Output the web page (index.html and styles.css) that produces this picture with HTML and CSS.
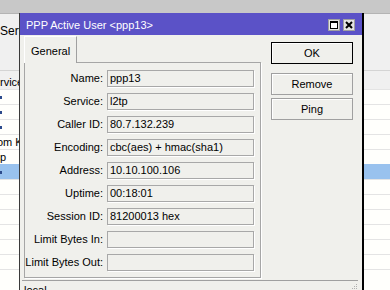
FILE: index.html
```html
<!DOCTYPE html>
<html lang="en">
<head>
    <meta charset="UTF-8">
    <title>PPP Active User</title>
    <link rel="stylesheet" href="styles.css">
</head>
<body>
    <div class="desk">
        <div class="desk-top"></div>
        <div class="toolbar"><span class="tb-tab">Serv</span></div>
        <div class="list-head"><span>rvice</span></div>
        <div class="row"><span class="mark"></span></div>
        <div class="row"><span class="mark"></span></div>
        <div class="row"><span class="mark"></span></div>
        <div class="row"><span class="cut">om K</span></div>
        <div class="row"><span>p</span></div>
        <div class="row selected"><span class="mark"></span></div>
        <div class="row"></div>
        <div class="row"></div>
        <div class="row"></div>
        <div class="row"></div>
        <div class="row"></div>
        <div class="row"></div>
        <div class="row"></div>
    </div>

    <div class="window">
        <div class="titlebar">
            <span class="title">PPP Active User &lt;ppp13&gt;</span>
            <span class="tb-buttons">
                <svg class="tb-btn" width="12" height="12" viewBox="0 0 12 12">
                    <rect x="0.5" y="0.5" width="11" height="11" fill="#e4e4e4" stroke="#a0a0a0"/>
                    <rect x="2.5" y="2.5" width="7" height="7" fill="#fff" stroke="#000"/>
                    <rect x="2" y="2" width="8" height="2" fill="#000"/>
                </svg>
                <svg class="tb-btn" width="12" height="12" viewBox="0 0 12 12">
                    <rect x="0.5" y="0.5" width="11" height="11" fill="#e4e4e4" stroke="#a0a0a0"/>
                    <path d="M3 3L9 9M9 3L3 9" stroke="#000" stroke-width="2"/>
                </svg>
            </span>
        </div>

        <div class="body">
            <div class="main">
                <div class="left">
                    <div class="tabs">
                        <div class="tab">General</div>
                    </div>
                    <div class="panel">
                        <div class="form">
                            <div class="label">Name:</div>
                            <div class="field">ppp13</div>
                            <div class="label">Service:</div>
                            <div class="field">l2tp</div>
                            <div class="label">Caller ID:</div>
                            <div class="field">80.7.132.239</div>
                            <div class="label">Encoding:</div>
                            <div class="field">cbc(aes) + hmac(sha1)</div>
                            <div class="label">Address:</div>
                            <div class="field">10.10.100.106</div>
                            <div class="label">Uptime:</div>
                            <div class="field">00:18:01</div>
                            <div class="label">Session ID:</div>
                            <div class="field">81200013 hex</div>
                            <div class="label">Limit Bytes In:</div>
                            <div class="field"></div>
                            <div class="label">Limit Bytes Out:</div>
                            <div class="field"></div>
                        </div>
                    </div>
                </div>
                <div class="buttons">
                    <button class="btn default">OK</button>
                    <button class="btn remove">Remove</button>
                    <button class="btn">Ping</button>
                </div>
            </div>
            <div class="status">
                <span>local</span>
                <svg class="grip" width="6" height="8" viewBox="0 0 6 8">
                    <rect x="4" y="1" width="1" height="1" fill="#b0b0b0"/>
                    <rect x="2" y="3" width="1" height="1" fill="#b0b0b0"/>
                    <rect x="4" y="3" width="1" height="1" fill="#b0b0b0"/>
                    <rect x="0" y="5" width="1" height="1" fill="#b0b0b0"/>
                    <rect x="2" y="5" width="1" height="1" fill="#b0b0b0"/>
                    <rect x="4" y="5" width="1" height="1" fill="#b0b0b0"/>
                </svg>
            </div>
        </div>
    </div>
</body>
</html>
```

FILE: styles.css
```css
* {
    box-sizing: border-box;
}
body {
    margin: 0;
    width: 390px;
    height: 290px;
    overflow: hidden;
    position: relative;
    font-family: "Liberation Sans", Arial, sans-serif;
    font-size: 11px;
    color: #000;
    background: #fffffc;
}

/* background list behind the dialog */
.desk-top {
    height: 13px;
    background: #c8c8c8;
}
.toolbar {
    height: 57px;
    background: #f0f0f0;
    border-top: 1px solid #b4b4b4;
    padding-top: 10px;
}
.tb-tab {
    font-size: 12px;
}
.list-head {
    height: 19px;
    background: #f0f0f0;
    border-top: 1px solid #d4d4d4;
    padding-top: 5px;
    line-height: 13px;
}
.row {
    height: 15px;
    border-top: 1px solid #e4e4e4;
    line-height: 14px;
    display: flex;
    align-items: center;
}
.row.selected {
    background: #99c2ee;
    border-top-color: #99c2ee;
}
.cut {
    margin-left: -3px;
    white-space: nowrap;
}
.mark {
    width: 2px;
    height: 3px;
    background: #2c4a8c;
}

/* dialog */
.window {
    position: absolute;
    left: 19px;
    top: 13px;
    width: 345px;
    height: 290px;
    background: #f0f0ec;
    border-left: 1px solid #3a3a3a;
    border-right: 2px solid #000;
}
.titlebar {
    height: 22px;
    background: #5b52c7;
    color: #fff;
    display: flex;
    align-items: center;
    justify-content: space-between;
    padding: 1px 7px 0 6px;
}
.title {
    font-size: 11px;
}
.tb-buttons {
    display: flex;
    gap: 3px;
}
.tb-btn {
    display: block;
}
.body {
    display: flex;
    flex-direction: column;
}
.main {
    display: flex;
    padding: 1px 0 0 4px;
}
.left {
    width: 237px;
}
.tabs {
    display: flex;
    height: 26px;
}
.tab {
    width: 53px;
    border-left: 1px solid #fff;
    border-top: 1px solid #fff;
    border-right: 1px solid #a0a0a0;
    padding: 8px 0 0 6px;
    line-height: 13px;
    margin-bottom: -1px;
    background: #f0f0ec;
    position: relative;
}
.panel {
    height: 216px;
    border: 1px solid #a6a6a6;
    box-shadow: 1px 1px 0 #fff;
    padding: 7px 5px 0 0;
}
.form {
    display: grid;
    grid-template-columns: 80px 147px;
    column-gap: 2px;
    row-gap: 6px;
    grid-auto-rows: 17px;
}
.label {
    text-align: right;
    padding-right: 2px;
    line-height: 17px;
}
.field {
    border: 1px solid #a8a8a8;
    box-shadow: 1px 1px 0 #fff;
    padding-left: 2px;
    line-height: 15px;
    white-space: nowrap;
    overflow: hidden;
}
.buttons {
    display: flex;
    flex-direction: column;
    margin-left: 10px;
    padding-top: 6px;
}
.btn {
    width: 82px;
    height: 22px;
    font-family: inherit;
    font-size: 11px;
    color: #000;
    background: #f0f0ec;
    border: 1px solid #a0a0a0;
    box-shadow: inset 1px 1px 0 #fff;
    padding: 0;
}
.btn.default {
    border-color: #000;
}
.btn.remove {
    margin: 9px 0 3px;
}
.status {
    margin: 2px 4px 0 2px;
    border-top: 1px solid #a0a0a0;
    padding: 3px 0 0 2px;
    line-height: 13px;
    display: flex;
    justify-content: space-between;
}
.grip {
    margin-top: -1px;
}
```
